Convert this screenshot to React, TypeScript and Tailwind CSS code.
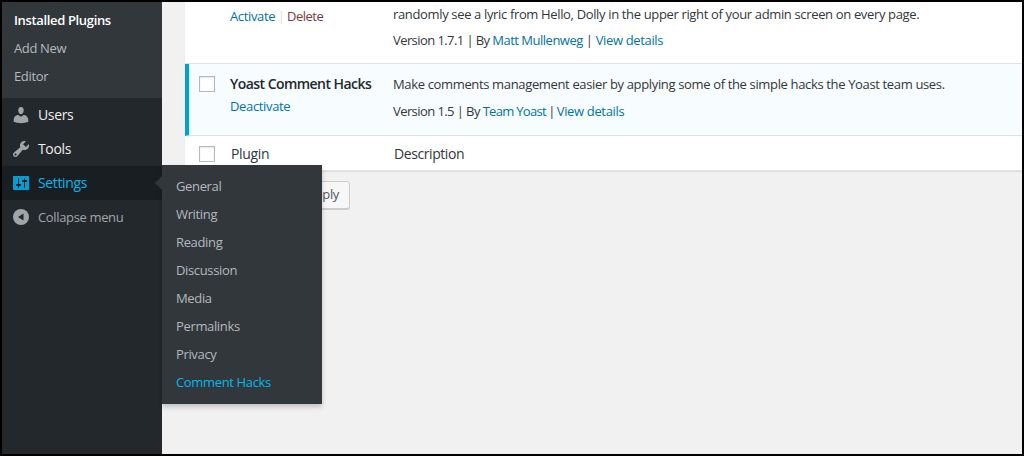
const font = "font-['Open_Sans',sans-serif]";

const subItems = ["Installed Plugins", "Add New", "Editor"];
const flyoutItems = ["General", "Writing", "Reading", "Discussion", "Media", "Permalinks", "Privacy", "Comment Hacks"];

function UserIcon() {
  return (
    <svg width="20" height="20" viewBox="0 0 20 20" fill="#a0a5aa">
      <path d="M10 9.250c-2.270 0-2.730-3.440-2.730-3.440C7 4.020 7.820 2 9.970 2c2.160 0 2.980 2.020 2.710 3.810 0 0-.41 3.440-2.680 3.440zm0 2.570L12.720 10c2.390 0 4.520 2.330 4.520 4.530v2.490s-3.650 1.130-7.240 1.130c-3.650 0-7.240-1.130-7.240-1.130v-2.490c0-2.250 1.940-4.480 4.420-4.480z" />
    </svg>
  );
}

function WrenchIcon() {
  return (
    <svg width="20" height="20" viewBox="0 0 20 20" fill="#a0a5aa">
      <path fillRule="evenodd" d="M16.680 9.770c-1.340 1.340-3.300 1.670-4.950.99l-5.410 6.520c-.99.99-2.590.99-3.570 0-.99-.98-.99-2.580 0-3.570l6.520-5.420c-.68-1.650-.35-3.610.99-4.950 1.280-1.280 3.120-1.620 4.720-1.060l-2.890 2.890 2.820 2.820 2.890-2.890c.56 1.600.22 3.440-1.060 4.720zM3.810 16.210c.4.390 1.030.39 1.420 0 .4-.4.4-1.030 0-1.430-.39-.39-1.020-.39-1.420 0-.39.4-.39 1.030 0 1.430z" />
    </svg>
  );
}

function SettingsIcon() {
  return (
    <svg width="20" height="20" viewBox="0 0 20 20" fill="#00a0d2">
      <path fillRule="evenodd" d="M18 16V4c0-.55-.45-1-1-1H3c-.55 0-1 .45-1 1v12c0 .55.45 1 1 1h14c.55 0 1-.45 1-1zM8 11h1c.55 0 1 .45 1 1s-.45 1-1 1H8v1.500c0 .28-.22.5-.5.5s-.5-.22-.5-.5V13H6c-.55 0-1-.45-1-1s.45-1 1-1h1V5.500c0-.28.22-.5.5-.5s.5.22.5.5V11zm5-2h-1c-.55 0-1-.45-1-1s.45-1 1-1h1V5.500c0-.28.22-.5.5-.5s.5.22.5.5V7h1c.55 0 1 .45 1 1s-.45 1-1 1h-1v5.500c0 .28-.22.5-.5.5s-.5-.22-.5-.5V9z" />
    </svg>
  );
}

function CollapseIcon() {
  return (
    <svg width="20" height="20" viewBox="0 0 20 20">
      <circle cx="10" cy="10" r="8" fill="#a0a5aa" />
      <path d="M12.500 6.500v7L7 10z" fill="#23282d" />
    </svg>
  );
}

function MenuRow({ icon, label, active, muted }: { icon: React.ReactNode; label: string; active?: boolean; muted?: boolean }) {
  return (
    <div className={`flex h-[34px] items-center ${active ? "bg-[#191e23] text-[#00b9eb]" : muted ? "text-[#a0a5aa]" : "text-[#eeeeee]"}`}>
      <div className="flex w-[36px] justify-center pl-[1px]">{icon}</div>
      <span className={muted ? "pt-px text-[13px] tracking-[-0.35px]" : "text-sm tracking-[-0.35px]"}>{label}</span>
    </div>
  );
}

function Checkbox() {
  return <div className="size-4 border border-[#b4b9be] bg-white shadow-[inset_0_1px_2px_rgba(0,0,0,0.1)]" />;
}

function VersionLine({ version, author, className, authorClass, sepClass }: { version: string; author: string; className: string; authorClass: string; sepClass: string }) {
  return (
    <p className={`leading-[24px] ${className}`}>
      <span className="tracking-[-0.58px]">Version {version} | By </span>
      <a className={`text-[#0073aa] ${authorClass}`}>{author}</a>
      <span className={sepClass}> | </span>
      <a className="text-[#0073aa]">View details</a>
    </p>
  );
}

export default function App() {
  return (
    <div className={`relative flex h-[456px] w-[1024px] overflow-hidden border-2 border-black bg-[#f1f1f1] tracking-[-0.35px] ${font}`}>
      <aside className="flex w-[160px] shrink-0 flex-col bg-[#23282d]">
        <div className="h-[96px] bg-[#32373c] pt-[4px] text-[13px] text-[#b4b9be]">
          {subItems.map((item, i) => (
            <div key={item} className={`flex h-[28px] items-center pt-px pl-[12px] ${i === 0 ? "font-semibold text-white" : ""}`}>
              {item}
            </div>
          ))}
        </div>
        <MenuRow icon={<UserIcon />} label="Users" />
        <MenuRow icon={<WrenchIcon />} label="Tools" />
        <MenuRow icon={<SettingsIcon />} label="Settings" active />
        <MenuRow icon={<CollapseIcon />} label="Collapse menu" muted />
      </aside>

      <main className="flex-1 pl-[23px] text-[13px] text-[#32373c]">
        <div className="bg-white shadow-[0_1px_1px_rgba(0,0,0,0.08)]">
          <div className="flex h-[62px] border-b border-[#e1e1e1]">
            <div className="w-[45px]" />
            <div className="w-[163px] pt-[5px]">
              <a className="text-[#0073aa]">Activate</a>
              <span className="mx-[2.5px] text-[#ddd]">|</span>
              <a className="tracking-[-0.5px] text-[#84383c]">Delete</a>
            </div>
            <div>
              <p className="leading-[24px]">randomly see a lyric from Hello, Dolly in the upper right of your admin screen on every page.</p>
              <VersionLine version="1.7.1" author="Matt Mullenweg" className="mt-[2px]" authorClass="tracking-[-0.5px]" sepClass="tracking-[-0.35px]" />
            </div>
          </div>
          <div className="flex h-[72px] border-b border-[#e1e1e1] border-l-4 border-l-[#00a0d2] bg-[#f7fcfe]">
            <div className="w-[41px] pl-[10px] pt-[12px]">
              <Checkbox />
            </div>
            <div className="w-[163px] pt-[10px]">
              <div className="text-sm leading-[20px] font-semibold tracking-[-0.55px] text-[#23282d]">Yoast Comment Hacks</div>
              <a className="mt-[1px] block leading-[22px] text-[#0073aa]">Deactivate</a>
            </div>
            <div className="pt-[8px]">
              <p className="leading-[24px]">Make comments management easier by applying some of the simple hacks the Yoast team uses.</p>
              <VersionLine version="1.5" author="Team Yoast" className="mt-[3px]" authorClass="tracking-[-0.7px]" sepClass="tracking-[-1px]" />
            </div>
          </div>
          <div className="flex h-[35px] items-center border-b border-[#e5e5e5] pt-[2px] text-sm">
            <div className="w-[45px] pl-[14px]">
              <Checkbox />
            </div>
            <div className="w-[163px] pl-[1px]">Plugin</div>
            <div className="pl-[1px] tracking-[-0.42px]">Description</div>
          </div>
        </div>
        <button className="mt-[10px] ml-[73px] flex h-[28px] w-[92px] items-center justify-end rounded-[3px] border border-[#cccccc] bg-[#f7f7f7] pr-[10px] text-[#555555] shadow-[0_1px_0_#cccccc]">
          Apply
        </button>
      </main>

      {/* flyout over the content */}
      <div className="absolute top-[163px] left-[160px] w-[160px] bg-[#32373c] pt-[8px] pb-[7px] text-[13px] text-[#b4b9be] shadow-[0_3px_5px_rgba(0,0,0,0.2)]">
        <div className="absolute top-[11px] left-[-7px] size-0 border-y-[7px] border-r-[7px] border-y-transparent border-r-[#32373c]" />
        {flyoutItems.map((item, i) => (
          <div key={item} className={`flex h-[28px] items-center pl-[14px] ${i === flyoutItems.length - 1 ? "text-[#00b9eb]" : ""}`}>
            {item}
          </div>
        ))}
      </div>
    </div>
  );
}
